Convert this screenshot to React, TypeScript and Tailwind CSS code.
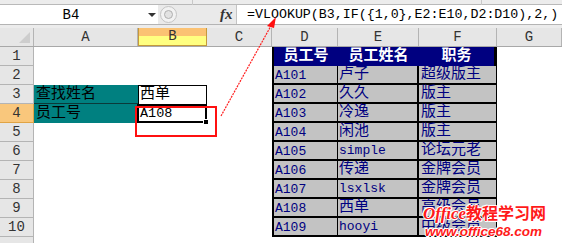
import React from "react";

// employee table in D1:F10
const staff: [string, string, string][] = [
  ["A101", "卢子", "超级版主"],
  ["A102", "久久", "版主"],
  ["A103", "冷逸", "版主"],
  ["A104", "闲池", "版主"],
  ["A105", "simple", "论坛元老"],
  ["A106", "传递", "金牌会员"],
  ["A107", "lsxlsk", "金牌会员"],
  ["A108", "西单", "高级会员"],
  ["A109", "hooyi", "中级会员"],
];

const letters = ["A", "B", "C", "D", "E", "F", "G"];
const widths = ["w-[104px]", "w-[69px]", "w-[65px]", "w-[66px]", "w-[81px]", "w-[78px]", "flex-1"];

const FormulaBar: React.FC = () => (
  <div className="h-[28px] bg-[#ececec] flex flex-col">
    <div className="h-[5px] border-b border-[#b9b9b9] relative">
      <div className="absolute left-[192px] top-0 h-[5px] border-l border-[#c8c8c8]" />
      <div className="absolute left-[481px] top-0 h-[5px] border-l border-[#c8c8c8]" />
    </div>
    <div className="h-[20px] flex border-b border-[#b4b4b4]">
      <div className="w-[158px] bg-white flex items-center relative">
        <span className="w-[142px] text-center text-[14px] leading-none">B4</span>
        <span className="absolute left-[148px] top-[8px] w-0 h-0 border-l-[4px] border-r-[4px] border-t-[4px] border-l-transparent border-r-transparent border-t-[#333]" />
      </div>
      <div className="w-[79px] flex items-center bg-[#eaeaea] border-r border-[#c4c4c4]">
        <div className="ml-[2px] w-[17px] h-[17px] rounded-full border border-[#c4c4c4] bg-[#f2f2f2] flex items-center justify-center">
          <div className="w-[9px] h-[9px] rounded-full border border-[#b0b0b0] bg-[#e2e2e2]" />
        </div>
        <span className="ml-[43px] font-['Liberation_Serif',serif] italic font-bold text-[15px] leading-none text-[#333]">
          fx
        </span>
      </div>
      <div className="flex-1 bg-white flex items-center pl-[10px] text-[13.3px] leading-none whitespace-nowrap overflow-hidden">
        =VLOOKUP(B3,IF(&#123;1,0&#125;,E2:E10,D2:D10),2,)
      </div>
    </div>
    <div className="h-[2px]" />
  </div>
);

const ColumnHeader: React.FC = () => (
  <div className="h-[19px] flex border-b border-[#a8a8a8] bg-[#e6e6e6] text-[14px] text-[#333]">
    <div className="w-[34px] shrink-0 border-r border-[#b4b4b4] flex items-end justify-end pr-[3px] pb-[3px]">
      <svg width="11" height="11">
        <polygon points="11,0 11,11 0,11" fill="#cdcdcd" />
      </svg>
    </div>
    {letters.map((l, i) => (
      <div
        key={l}
        className={`${widths[i]} shrink-0 flex items-center justify-center border-r ${
          l === "B"
            ? "bg-[linear-gradient(to_bottom,#fbc273_50%,#ffff80_50%)] border-[#c49a3c] border-l border-b"
            : "border-[#b4b4b4]"
        }`}
      >
        {l}
      </div>
    ))}
  </div>
);

const SheetRow: React.FC<{ n: number }> = ({ n }) => {
  const item = n >= 2 && n <= 10 ? staff[n - 2] : null;
  return (
    <div className="h-[19px] flex text-[13px] leading-[19px]">
      <div
        className={`w-[34px] shrink-0 flex items-center justify-center pt-[1px] border-r border-b text-[14px] text-[#333] ${
          n === 4 ? "bg-[#f9c77c] border-[#e0a445]" : "bg-[#e6e6e6] border-[#b4b4b4]"
        }`}
      >
        {n < 11 ? n : ""}
      </div>

      {/* column A */}
      {n === 3 || n === 4 ? (
        <div className={`w-[104px] shrink-0 bg-[#008080] pl-[2px] text-[15px] leading-[19px] ${n === 3 ? "border-b border-[#0a3a3a]" : ""}`}>
          {n === 3 ? "查找姓名" : "员工号"}
        </div>
      ) : (
        <div className="w-[104px] shrink-0" />
      )}

      {/* column B */}
      {n === 3 && (
        <div className="w-[69px] shrink-0 bg-white border-t border-l border-r border-black pl-[1px] text-[15px] leading-[18px]">
          西单
        </div>
      )}
      {n === 4 && (
        <div className="w-[69px] shrink-0 relative bg-white pl-[2px] pt-[1px] text-[13.5px] leading-[18px]">
          <div className="absolute -left-[1px] top-0 right-0 bottom-0 border-2 border-black" />
          <div className="absolute -right-[2px] -bottom-[2px] w-[6px] h-[6px] bg-black border border-white" />
          <span className="relative">A108</span>
        </div>
      )}
      {n !== 3 && n !== 4 && <div className="w-[69px] shrink-0" />}

      {/* column C */}
      <div className="w-[65px] shrink-0" />

      {/* columns D-F */}
      {n === 1 && (
        <>
          <div className="w-[66px] shrink-0 bg-[#000080] border-l-2 border-black text-white font-bold text-[15px] leading-[19px] text-center">
            员工号
          </div>
          <div className="w-[81px] shrink-0 bg-[#000080] text-white font-bold text-[15px] leading-[19px] text-center">
            员工姓名
          </div>
          <div className="w-[78px] shrink-0 bg-[#000080] border-r-[3px] border-black text-white font-bold text-[15px] leading-[19px] text-center">
            职务
          </div>
        </>
      )}
      {item && (
        <>
          <div className="w-[66px] shrink-0 bg-[#c3c3c3] border-l-2 border-r border-b-2 border-black pl-[1px] pt-[1px] leading-[17px] text-[#000080]">
            {item[0]}
          </div>
          <div className="w-[81px] shrink-0 bg-[#c3c3c3] border-r-2 border-b-2 border-black pl-[1px] text-[#000080] text-[15px] leading-[17px]">
            {/^[a-z]/.test(item[1]) ? <span className="text-[13px] leading-[18px]">{item[1]}</span> : item[1]}
          </div>
          <div className="w-[78px] shrink-0 bg-[#c3c3c3] border-r border-b-2 border-black pl-[2px] text-[#000080] text-[15px] leading-[17px]">
            {item[2]}
          </div>
        </>
      )}
      {!item && n !== 1 && (
        <>
          <div className="w-[66px] shrink-0" />
          <div className="w-[81px] shrink-0" />
          <div className="w-[78px] shrink-0" />
        </>
      )}

      {/* column G */}
      <div className="flex-1" />
    </div>
  );
};

const App: React.FC = () => {
  return (
    <div className="w-[562px] h-[243px] overflow-hidden relative bg-white text-black font-['Liberation_Mono','Noto_Sans_CJK_SC',monospace]">
      <FormulaBar />
      <ColumnHeader />
      {Array.from({ length: 11 }, (_, i) => (
        <SheetRow key={i} n={i + 1} />
      ))}

      {/* red box around B4 */}
      <div className="absolute left-[135px] top-[106px] w-[82px] h-[31px] border-2 border-[#ff1010]" />

      {/* arrow to the formula */}
      <svg className="absolute left-0 top-0 pointer-events-none" width="562" height="243">
        <line x1="221" y1="116" x2="272" y2="24" stroke="#ff2020" strokeWidth="1.2" strokeDasharray="2 1" />
        <polygon points="276,17 267,26 274,28" fill="#ff1010" />
      </svg>

      {/* watermark */}
      <div className="absolute left-[423px] top-[204px] flex flex-col leading-none text-[#ff1a1a] font-bold [text-shadow:1px_0_0_#fff,-1px_0_0_#fff,0_1px_0_#fff,0_-1px_0_#fff,1px_1px_0_#fff,-1px_-1px_0_#fff]">
        <span className="text-[16px] whitespace-nowrap">
          <span className="italic font-['Liberation_Serif',serif] text-[17px]">Office</span>
          <span className="font-['Noto_Sans_CJK_SC',sans-serif]">教程学习网</span>
        </span>
        <span className="mt-[2px] ml-[2px] text-[13.5px] font-['Liberation_Sans',sans-serif] italic">www.office68.com</span>
      </div>
    </div>
  );
};

export default App;
